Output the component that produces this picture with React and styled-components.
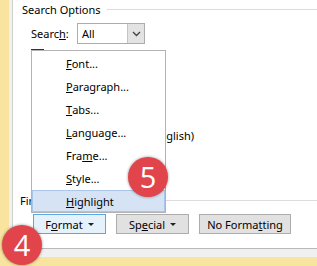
import React from 'react';
import styled, { createGlobalStyle } from 'styled-components';

const Global = createGlobalStyle`
  html, body { margin: 0; padding: 0; }
  body {
    background: #f8e49e;
    font-family: "Noto Sans", "Liberation Sans", sans-serif;
    font-size: 11px;
    color: #000;
  }
`

const Screen = styled.div`
  position: relative;
  width: 317px;
  height: 266px;
  overflow: hidden;
  display: flex;
  flex-direction: column;
  background: #f8e49e;
`
const Row = styled.div`
  display: flex;
  height: 257px;
`
const YellowStrip = styled.div`
  width: 9px;
  flex: none;
`
const Frame = styled.div`
  flex: 1;
  background: #f0f0f0;
  padding: 0 0 8px 3px;
  display: flex;
`
const Panel = styled.div`
  flex: 1;
  background: #fff;
  border-left: 1px solid #cfcfcf;
  border-bottom: 1px solid #b9b9b9;
  display: flex;
  flex-direction: column;
  padding-left: 9px;
`
const GroupHead = styled.div`
  display: flex;
  align-items: center;
  gap: 6px;
  height: 19px;
  margin-left: ${p => p.$indent || 0}px;
  span { white-space: nowrap; }
  &::after {
    content: '';
    flex: 1;
    height: 1px;
    background: #dcdcdc;
  }
`
const SearchRow = styled.div`
  display: flex;
  align-items: center;
  margin: 4px 0 0 9px;
  height: 21px;
`
const Label = styled.span`
  width: 46px;
`
const Key = styled.u`
  text-decoration: underline;
`
const Select = styled.div`
  width: 66px;
  height: 19px;
  border: 1px solid #acacac;
  display: flex;
  align-items: center;
  background: #fff;
`
const SelectText = styled.span`
  flex: 1;
  padding-left: 4px;
`
const SelectArrow = styled.span`
  width: 16px;
  height: 19px;
  background: #e3e3e3;
  border-left: 1px solid #c4c4c4;
  display: flex;
  align-items: center;
  justify-content: center;
`
const Options = styled.div`
  height: 142px;
  padding: 5px 0 0 9px;
`
const CheckBox = styled.div`
  width: 11px;
  height: 11px;
  border: 1px solid #333;
`
const BehindText = styled.div`
  margin: 66px 0 0 119px;
  white-space: nowrap;
`
const Buttons = styled.div`
  display: flex;
  gap: 10px;
  margin: 4px 0 0 11px;
`
const Button = styled.div`
  width: ${p => p.$w}px;
  height: 18px;
  box-sizing: content-box;
  border: 1px solid ${p => (p.$active ? '#5aa6e6' : '#adadad')};
  background: ${p => (p.$active ? '#e5f1fb' : '#e1e1e1')};
  display: flex;
  align-items: center;
  justify-content: center;
  gap: 5px;
  white-space: nowrap;
`
const Caret = styled.span`
  width: 0;
  height: 0;
  border-left: 3px solid transparent;
  border-right: 3px solid transparent;
  border-top: 3px solid #222;
`
const BottomStrip = styled.div`
  height: 9px;
`

const Menu = styled.div`
  position: absolute;
  left: 31px;
  top: 50px;
  width: 133px;
  height: 161px;
  border: 1px solid #b3b3b3;
  background: #fff;
  display: flex;
  flex-direction: column;
`
const MenuItem = styled.div`
  box-sizing: border-box;
  height: 22px;
  border: 1px solid ${p => (p.$hot ? '#a9c5ea' : 'transparent')};
  background: ${p => (p.$hot ? '#d6e3f4' : 'transparent')};
  margin-top: 1px;
  display: flex;
  align-items: center;
  padding-left: 33px;
  white-space: nowrap;
`
const Badge = styled.div`
  position: absolute;
  left: ${p => p.$x - 20}px;
  top: ${p => p.$y - 20}px;
  width: 40px;
  height: 40px;
  border-radius: 50%;
  background: #e1454b;
  box-shadow: 0 0 3px rgba(0, 0, 0, 0.45);
  color: #fff;
  font-family: "Open Sans", "Noto Sans", sans-serif;
  font-size: 29px;
  line-height: 40px;
  text-align: center;
`

const items = [
  ['', 'F', 'ont...'],
  ['', 'P', 'aragraph...'],
  ['', 'T', 'abs...'],
  ['', 'L', 'anguage...'],
  ['Fra', 'm', 'e...'],
  ['', 'S', 'tyle...'],
  ['', 'H', 'ighlight'],
]

const Chevron = () => (
  <svg width="9" height="6" viewBox="0 0 9 6">
    <path d="M1 1 L4.5 4.5 L8 1" fill="none" stroke="#444" strokeWidth="1.4" />
  </svg>
)

export default function App() {
  return (
    <>
      <Global />
      <Screen>
        <Row>
          <YellowStrip />
          <Frame>
            <Panel>
              <GroupHead><span>Search Options</span></GroupHead>
              <SearchRow>
                <Label>Searc<Key>h</Key>:</Label>
                <Select>
                  <SelectText>All</SelectText>
                  <SelectArrow><Chevron /></SelectArrow>
                </Select>
              </SearchRow>
              <Options>
                <CheckBox />
                <BehindText>(English)</BehindText>
              </Options>
              <GroupHead $indent={-2}><span>Find</span></GroupHead>
              <Buttons>
                <Button $w={71} $active><span>F<Key>o</Key>rmat</span><Caret /></Button>
                <Button $w={71}><span>Sp<Key>e</Key>cial</span><Caret /></Button>
                <Button $w={90}><span>No Forma<Key>t</Key>ting</span></Button>
              </Buttons>
            </Panel>
          </Frame>
        </Row>
        <BottomStrip />
        <Menu>
          {items.map(([a, k, b], i) => (
            <MenuItem key={i} $hot={i === 6}>{a}<Key>{k}</Key>{b}</MenuItem>
          ))}
        </Menu>
        <Badge $x={148} $y={177}>5</Badge>
        <Badge $x={22} $y={245}>4</Badge>
      </Screen>
    </>
  );
}
